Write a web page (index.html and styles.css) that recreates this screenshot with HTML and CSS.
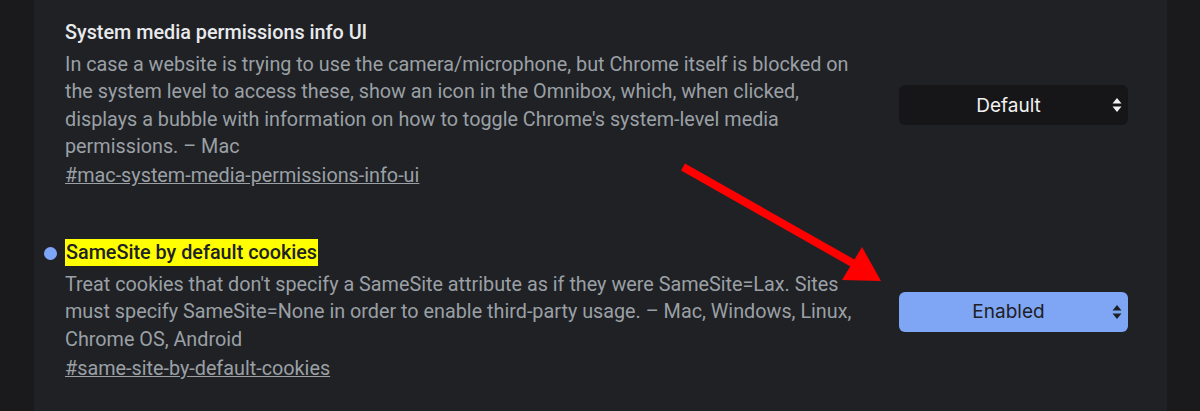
FILE: index.html
```html
<!DOCTYPE html>
<html>
<head>
<meta charset="utf-8">
<link rel="stylesheet" href="styles.css">
</head>
<body>
<div class="page">
  <div class="side"></div>
  <main class="panel">
    <section class="flag">
      <div class="info">
        <h3 class="title">System media permissions info UI</h3>
        <p class="desc">In case a website is trying to use the camera/microphone, but Chrome itself is blocked on the system level to access these, show an icon in the Omnibox, which, when clicked, displays a bubble with information on how to toggle Chrome's system-level media permissions. – Mac</p>
        <a class="link">#mac-system-media-permissions-info-ui</a>
      </div>
      <div class="select dark"><span>Default</span><svg class="chev" width="10" height="16" viewBox="0 0 10 16"><path d="M5 1 L9.5 6.5 H0.5 Z M5 15 L9.5 9.5 H0.5 Z" fill="currentColor"/></svg></div>
    </section>
    <section class="flag second">
      <div class="info">
        <h3 class="title"><span class="dot"></span><mark class="hl">SameSite by default cookies</mark></h3>
        <p class="desc">Treat cookies that don't specify a SameSite attribute as if they were SameSite=Lax. Sites must specify SameSite=None in order to enable third-party usage. – Mac, Windows, Linux, Chrome OS, Android</p>
        <a class="link">#same-site-by-default-cookies</a>
      </div>
      <div class="select blue"><span>Enabled</span><svg class="chev" width="10" height="16" viewBox="0 0 10 16"><path d="M5 1 L9.5 6.5 H0.5 Z M5 15 L9.5 9.5 H0.5 Z" fill="currentColor"/></svg></div>
    </section>
    <svg class="arrow" width="1200" height="411" viewBox="0 0 1200 411">
      <line x1="683" y1="167" x2="856" y2="265" stroke="#ff0000" stroke-width="8"/>
      <polygon points="862,247 881,281 842,280" fill="#ff0000"/>
    </svg>
  </main>
  <div class="side"></div>
</div>
</body>
</html>
```
FILE: styles.css
```css
html, body {
  margin: 0;
  padding: 0;
  background: #1b1b1d;
}
.page {
  display: flex;
  width: 1200px;
  height: 411px;
  overflow: hidden;
}
.side {
  width: 34px;
  background: #1a1a1c;
  flex: none;
}
.side:last-child {
  width: 33px;
}
.panel {
  flex: 1;
  background: #202124;
  padding: 20px 39px 0 31px;
  font-family: Roboto, "Liberation Sans", sans-serif;
}
.flag {
  display: flex;
  align-items: center;
  gap: 34px;
}
.second {
  margin-top: 50px;
}
.info {
  width: 800px;
  flex: none;
}
.title {
  position: relative;
  margin: 0;
  font-size: 19.8px;
  font-weight: 500;
  color: #e8eaed;
  line-height: 26px;
}
.hl {
  background: #ffff00;
  color: #202124;
  padding: 2px 1px 2px 1px;
}
.dot {
  position: absolute;
  left: -21px;
  top: 7px;
  width: 13px;
  height: 13px;
  border-radius: 50%;
  background: #7ea6f8;
}
.desc {
  margin: 5px 0 0;
  font-size: 19.8px;
  line-height: 27.3px;
  color: #9aa0a6;
}
.link {
  display: inline-block;
  margin-top: 2px;
  font-size: 19.8px;
  line-height: 28px;
  color: #9aa0a6;
  text-decoration: underline;
}
.select {
  width: 229px;
  height: 40px;
  border-radius: 6px;
  display: flex;
  align-items: center;
  justify-content: center;
  position: relative;
  font-family: Inter, "Liberation Sans", sans-serif;
  font-size: 19px;
  flex: none;
}
.select span {
  margin-left: -10px;
}
.dark {
  background: #161618;
  color: #f1f1f1;
}
.blue {
  background: #7ea6f5;
  color: #1e2023;
}
.chev {
  position: absolute;
  right: 6px;
  top: 12px;
}
.arrow {
  position: absolute;
  left: 0;
  top: 0;
  pointer-events: none;
}
```
